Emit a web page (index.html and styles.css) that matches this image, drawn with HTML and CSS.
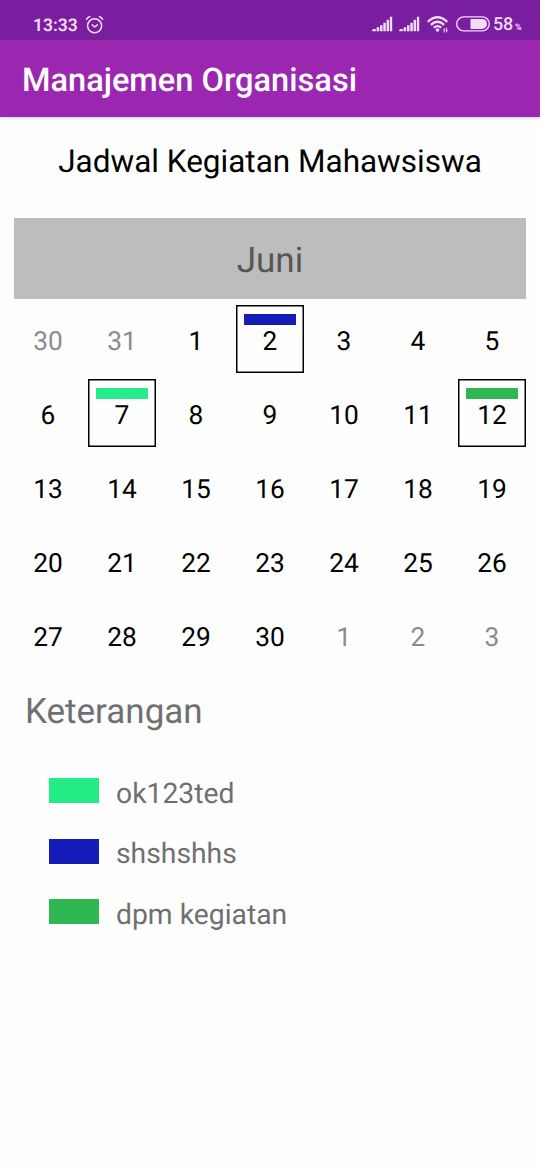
FILE: index.html
```html
<!DOCTYPE html>
<html lang="id">
<head>
<meta charset="utf-8">
<title>Manajemen Organisasi</title>
<link rel="stylesheet" href="styles.css">
</head>
<body>
<header class="status">
  <span class="clock">13:33</span>
  <svg class="alarm" width="20" height="20" viewBox="0 0 20 20" fill="none" stroke="#f3dcfa" stroke-width="1.5" stroke-linecap="round" stroke-linejoin="round"><circle cx="9.6" cy="10.8" r="7"/><path d="M7.2 9.800l2.400 2.200 2.800-2.200M1.500 4.300C2.300 3 3.300 2 4.800 1.500M17.700 4.300C16.900 3 15.900 2 14.400 1.500"/></svg>
  <svg class="indicators" width="122" height="20" viewBox="0 0 122 20" fill="#f3dcfa">
    <path id="bars" d="M0 15.500L1 14h2.800v2.300H.3zM4.600 12.300h2.600v4H4.600zM8 10.200h2.500v6.100H8zM11.300 7.700h2.500v8.600h-2.500zM14.600 4.700h2.500v11.600h-2.500zM17.900 1.700h2.300v14.600h-2.300z"/>
    <use href="#bars" x="27"/>
    <g fill="none" stroke="#f3dcfa" stroke-width="2.300"><path d="M55.800 6.800Q65.500-2.200 75.200 6.800M58.800 9.800Q65.500 3.800 72.200 9.800M61.800 12.700Q65.500 9.500 69.200 12.700"/></g>
    <circle cx="65.500" cy="15" r="1.800"/>
    <path d="M71 15l1.700-2.500v5h-1V15zM74 12.500h1V15h1l-2 3z"/>
    <rect x="84.700" y="1.900" width="32.600" height="14" rx="7" fill="none" stroke="#f3dcfa" stroke-width="1.400"/>
    <path d="M98.500 3.900H110a5 5 0 0 1 0 10H98.500z"/>
  </svg>
  <span class="battery">58<small>%</small></span>
</header>
<div class="appbar">Manajemen Organisasi</div>
<main>
  <h1 class="heading">Jadwal Kegiatan Mahawsiswa</h1>
  <div class="month">Juni</div>
  <section class="calendar">
    <div class="day out">30</div><div class="day out">31</div><div class="day">1</div><div class="day event blue">2</div><div class="day">3</div><div class="day">4</div><div class="day">5</div>
    <div class="day">6</div><div class="day event mint">7</div><div class="day">8</div><div class="day">9</div><div class="day">10</div><div class="day">11</div><div class="day event green">12</div>
    <div class="day">13</div><div class="day">14</div><div class="day">15</div><div class="day">16</div><div class="day">17</div><div class="day">18</div><div class="day">19</div>
    <div class="day">20</div><div class="day">21</div><div class="day">22</div><div class="day">23</div><div class="day">24</div><div class="day">25</div><div class="day">26</div>
    <div class="day">27</div><div class="day">28</div><div class="day">29</div><div class="day">30</div><div class="day out">1</div><div class="day out">2</div><div class="day out">3</div>
  </section>
  <h2 class="legend-title">Keterangan</h2>
  <ul class="legend">
    <li class="mint">ok123ted</li>
    <li class="blue">shshshhs</li>
    <li class="green">dpm kegiatan</li>
  </ul>
</main>
</body>
</html>
```
FILE: styles.css
```css
* { box-sizing: border-box; }
body { margin: 0; min-height: 1170px; background: #fefefe; font-family: Roboto, sans-serif; color: #000; text-rendering: geometricPrecision; }
.mint { --tag: #24ec86; }
.blue { --tag: #151cb8; }
.green { --tag: #2fb851; }
.status { height: 40px; background: #7a1ea0; color: #f3dcfa; display: flex; align-items: center; padding: 10px 19px 0 33px; }
.clock { font-size: 17.5px; font-weight: 600; width: 52px; line-height: 30px; padding-top: 1px; }
.alarm { margin-top: -1px; }
.indicators { margin-left: auto; flex: none; margin-right: -1px; }
.battery { font-size: 18px; font-weight: 500; line-height: 30px; padding-top: 3px; width: 28px; letter-spacing: -.3px; white-space: nowrap; }
.battery small { font-size: 9px; font-weight: 700; margin-left: 2px; }
.appbar { height: 77px; background: #9b27b0; color: #fff; font-size: 32.6px; font-weight: 500; line-height: 81px; padding-left: 22px; white-space: nowrap; box-shadow: 0 1px 3px rgba(0,0,0,.2); }
main { padding: 0 14px; }
.heading { margin: 0; height: 101px; font-size: 31.5px; font-weight: 400; line-height: 90px; text-align: center; white-space: nowrap; }
.month { height: 81px; background: #bdbdbd; color: #565656; font-size: 35px; line-height: 86px; text-align: center; }
.calendar { display: grid; grid-template-columns: repeat(7, 68px); grid-auto-rows: 68px; gap: 6px; padding-top: 6px; }
.day { font-size: 26.3px; line-height: 74px; text-align: center; }
.day.out { color: #8c8c8c; }
.event { border: 1px solid #000; box-shadow: inset 0 0 0 .5px #000; line-height: 72px; background: linear-gradient(var(--tag), var(--tag)) center 7.5px / 52px 11px no-repeat; }
.legend-title { margin: 0; padding-left: 11px; height: 94px; font-size: 35px; font-weight: 400; line-height: 85px; color: #707070; }
.legend { list-style: none; margin: 0; padding: 0 0 0 35px; }
.legend li { display: flex; align-items: center; gap: 17px; height: 60.5px; font-size: 28.3px; color: #707070; }
.legend li::before { content: ""; width: 50px; height: 25px; background: var(--tag); margin-top: -5px; }
```
